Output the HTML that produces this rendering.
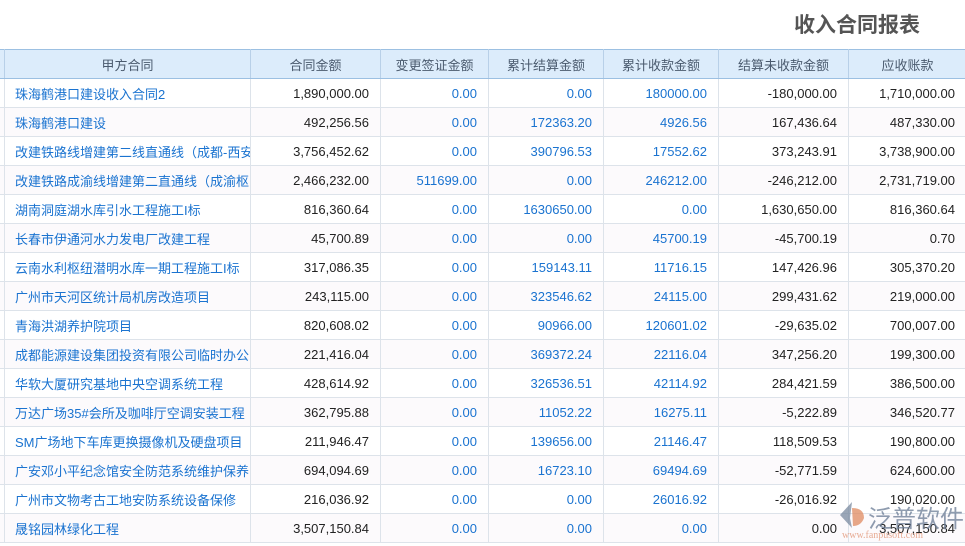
<html><head><style>
body{margin:0;width:965px;height:546px;background:#fff;overflow:hidden;font-family:"Liberation Sans","Noto Sans CJK SC",sans-serif;position:relative}
.t{position:absolute;left:794px;top:9px;font-size:21px;font-weight:bold;color:#555}
table{position:absolute;left:-10px;top:49px;width:976px;border-collapse:collapse;table-layout:fixed;font-size:13px}
td,th{box-sizing:border-box;border:1px solid #dde3ea;padding:0 11px 0 7px;white-space:nowrap;overflow:hidden}
td{height:29px}
th{height:29px;background:#dcecfb;color:#4a5a6e;font-weight:normal;border-color:#b8d0e8;border-top:1px solid #9cc0e2;border-bottom:1px solid #9cc0e2;padding:0 4px}
td{text-align:right;color:#222}
td.n{text-align:left;color:#1a73d0;padding-left:10px;padding-right:2px}
td.b{color:#1a73d0}
tr:nth-child(odd) td{background:#fcfafc}
.wm{position:absolute;left:832px;top:497px;opacity:.75}
</style></head><body>
<div class="t">收入合同报表</div>
<table>
<colgroup><col style="width:14px"><col style="width:246px"><col style="width:130px"><col style="width:108px"><col style="width:115px"><col style="width:115px"><col style="width:130px"><col style="width:118px"></colgroup>
<tr><th></th><th>甲方合同</th><th>合同金额</th><th>变更签证金额</th><th>累计结算金额</th><th>累计收款金额</th><th>结算未收款金额</th><th>应收账款</th></tr>
<tr><td></td><td class="n">珠海鹤港口建设收入合同2</td><td>1,890,000.00</td><td class="b">0.00</td><td class="b">0.00</td><td class="b">180000.00</td><td>-180,000.00</td><td>1,710,000.00</td></tr>
<tr><td></td><td class="n">珠海鹤港口建设</td><td>492,256.56</td><td class="b">0.00</td><td class="b">172363.20</td><td class="b">4926.56</td><td>167,436.64</td><td>487,330.00</td></tr>
<tr><td></td><td class="n">改建铁路线增建第二线直通线（成都-西安</td><td>3,756,452.62</td><td class="b">0.00</td><td class="b">390796.53</td><td class="b">17552.62</td><td>373,243.91</td><td>3,738,900.00</td></tr>
<tr><td></td><td class="n">改建铁路成渝线增建第二直通线（成渝枢</td><td>2,466,232.00</td><td class="b">511699.00</td><td class="b">0.00</td><td class="b">246212.00</td><td>-246,212.00</td><td>2,731,719.00</td></tr>
<tr><td></td><td class="n">湖南洞庭湖水库引水工程施工I标</td><td>816,360.64</td><td class="b">0.00</td><td class="b">1630650.00</td><td class="b">0.00</td><td>1,630,650.00</td><td>816,360.64</td></tr>
<tr><td></td><td class="n">长春市伊通河水力发电厂改建工程</td><td>45,700.89</td><td class="b">0.00</td><td class="b">0.00</td><td class="b">45700.19</td><td>-45,700.19</td><td>0.70</td></tr>
<tr><td></td><td class="n">云南水利枢纽潜明水库一期工程施工I标</td><td>317,086.35</td><td class="b">0.00</td><td class="b">159143.11</td><td class="b">11716.15</td><td>147,426.96</td><td>305,370.20</td></tr>
<tr><td></td><td class="n">广州市天河区统计局机房改造项目</td><td>243,115.00</td><td class="b">0.00</td><td class="b">323546.62</td><td class="b">24115.00</td><td>299,431.62</td><td>219,000.00</td></tr>
<tr><td></td><td class="n">青海洪湖养护院项目</td><td>820,608.02</td><td class="b">0.00</td><td class="b">90966.00</td><td class="b">120601.02</td><td>-29,635.02</td><td>700,007.00</td></tr>
<tr><td></td><td class="n">成都能源建设集团投资有限公司临时办公</td><td>221,416.04</td><td class="b">0.00</td><td class="b">369372.24</td><td class="b">22116.04</td><td>347,256.20</td><td>199,300.00</td></tr>
<tr><td></td><td class="n">华软大厦研究基地中央空调系统工程</td><td>428,614.92</td><td class="b">0.00</td><td class="b">326536.51</td><td class="b">42114.92</td><td>284,421.59</td><td>386,500.00</td></tr>
<tr><td></td><td class="n">万达广场35#会所及咖啡厅空调安装工程</td><td>362,795.88</td><td class="b">0.00</td><td class="b">11052.22</td><td class="b">16275.11</td><td>-5,222.89</td><td>346,520.77</td></tr>
<tr><td></td><td class="n">SM广场地下车库更换摄像机及硬盘项目</td><td>211,946.47</td><td class="b">0.00</td><td class="b">139656.00</td><td class="b">21146.47</td><td>118,509.53</td><td>190,800.00</td></tr>
<tr><td></td><td class="n">广安邓小平纪念馆安全防范系统维护保养</td><td>694,094.69</td><td class="b">0.00</td><td class="b">16723.10</td><td class="b">69494.69</td><td>-52,771.59</td><td>624,600.00</td></tr>
<tr><td></td><td class="n">广州市文物考古工地安防系统设备保修</td><td>216,036.92</td><td class="b">0.00</td><td class="b">0.00</td><td class="b">26016.92</td><td>-26,016.92</td><td>190,020.00</td></tr>
<tr><td></td><td class="n">晟铭园林绿化工程</td><td>3,507,150.84</td><td class="b">0.00</td><td class="b">0.00</td><td class="b">0.00</td><td>0.00</td><td>3,507,150.84</td></tr>
</table>
<div class="wm">
<svg width="30" height="30" viewBox="0 0 30 30" style="position:absolute;left:5px;top:3px"><path d="M15 2 L3 15 L15 28 L13 18 Z" fill="#7a8aa0"/><path d="M15 8 Q27 8 27 18 Q24 26 16 26 Z" fill="#e08a60"/></svg>
<div style="position:absolute;left:36px;top:2px;font-size:24px;color:#6a7b95;white-space:nowrap">泛普软件</div>
<div style="position:absolute;left:10px;top:33px;font-size:10px;color:#e09070;font-family:'Liberation Serif',serif;white-space:nowrap">www.fanpusoft.com</div>
</div>
</body></html>
